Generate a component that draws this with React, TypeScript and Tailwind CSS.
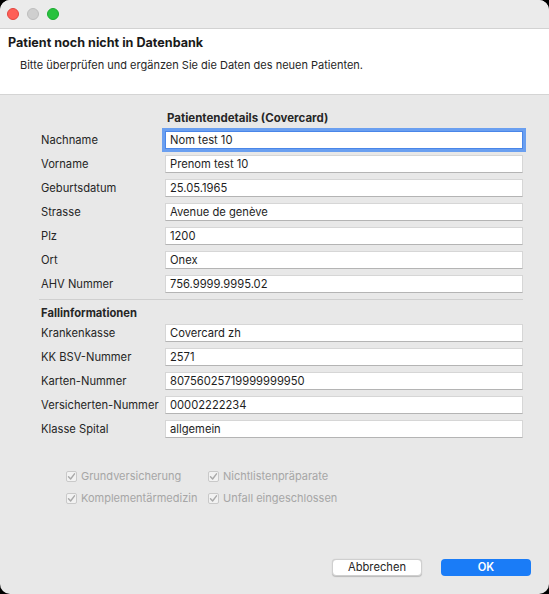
const patientFields = [
  { label: 'Nachname', value: 'Nom test 10', focused: true },
  { label: 'Vorname', value: 'Prenom test 10' },
  { label: 'Geburtsdatum', value: '25.05.1965' },
  { label: 'Strasse', value: 'Avenue de genève' },
  { label: 'Plz', value: '1200' },
  { label: 'Ort', value: 'Onex' },
  { label: 'AHV Nummer', value: '756.9999.9995.02' },
]

const caseFields = [
  { label: 'Krankenkasse', value: 'Covercard zh' },
  { label: 'KK BSV-Nummer', value: '2571' },
  { label: 'Karten-Nummer', value: '80756025719999999950' },
  { label: 'Versicherten-Nummer', value: '00002222234' },
  { label: 'Klasse Spital', value: 'allgemein' },
]

function FieldRow({ label, value, focused }: { label: string; value: string; focused?: boolean }) {
  return (
    <div className="flex h-[24px] items-center">
      <span className="w-[124px] whitespace-nowrap text-[11.2px] text-[#262626]">{label}</span>
      <div
        className={`flex h-[18px] w-[358px] items-center bg-white pl-[4px] text-[11.2px] text-[#1e1e1e] ${
          focused
            ? 'outline outline-[3px] outline-[#6a9ff0] border border-[#4a86e8]'
            : 'border border-[#d6d6d6] border-b-[#b4b4b4]'
        }`}
      >
        {value}
      </div>
    </div>
  )
}

function Check({ label }: { label: string }) {
  return (
    <div className="flex h-[18px] items-center gap-[4px]">
      <span className="flex h-[11px] w-[11px] items-center justify-center rounded-[2px] border border-[#c9c9c9] bg-[#f2f2f2]">
        <svg width="9" height="9" viewBox="0 0 9 9">
          <path d="M1.5 4.8 L3.6 7 L7.5 1.8" fill="none" stroke="#a9a9a9" strokeWidth="1.4" strokeLinecap="round" strokeLinejoin="round" />
        </svg>
      </span>
      <span className="whitespace-nowrap text-[11px] text-[#a6a6a6]">{label}</span>
    </div>
  )
}

export default function App() {
  return (
    <div className="h-[594px] w-[549px] bg-black" style={{ fontFamily: 'Inter, "Liberation Sans", sans-serif' }}>
      <div className="flex h-full w-full flex-col overflow-hidden rounded-[10px] bg-[#e8e8e8]">
        <div className="flex h-[29px] shrink-0 items-center gap-[8px] border-b border-[#d2d2d2] bg-[#ebebeb] pl-[7px]">
          <span className="h-[12px] w-[12px] rounded-full bg-[#fe5f57] border border-[#e2463f]" />
          <span className="h-[12px] w-[12px] rounded-full bg-[#cfcfcf] border border-[#bdbdbd]" />
          <span className="h-[12px] w-[12px] rounded-full bg-[#29c23f] border border-[#1aab2f]" />
        </div>
        <div className="h-[66px] shrink-0 border-b border-[#d4d4d4] bg-white pl-[8px] pt-[5px]">
          <div className="h-[18px] text-[12.6px] font-bold leading-[18px] text-[#1a1a1a]">Patient noch nicht in Datenbank</div>
          <div className="pl-[12px] pt-[4px] text-[11px] leading-[18px] text-[#262626]">
            Bitte überprüfen und ergänzen Sie die Daten des neuen Patienten.
          </div>
        </div>
        <div className="flex flex-1 flex-col pl-[41px] pt-[14px]">
          <div className="h-[18px] pl-[126px] text-[11.5px] font-bold leading-[18px] text-[#262626]">Patientendetails (Covercard)</div>
          <div className="mt-[1px] flex flex-col">
            {patientFields.map((f) => (
              <FieldRow key={f.label} {...f} />
            ))}
          </div>
          <div className="ml-[-2px] mt-[3px] h-px w-[484px] bg-[#cfcfcf]" />
          <div className="mt-[4px] h-[18px] text-[11.2px] font-bold leading-[18px] text-[#262626]">Fallinformationen</div>
          <div className="mt-[-1px] flex flex-col">
            {caseFields.map((f) => (
              <FieldRow key={f.label} {...f} />
            ))}
          </div>
          <div className="ml-[25px] mt-[26px] grid w-[290px] grid-cols-[142px_1fr] gap-y-[4px]">
            <Check label="Grundversicherung" />
            <Check label="Nichtlistenpräparate" />
            <Check label="Komplementärmedizin" />
            <Check label="Unfall eingeschlossen" />
          </div>
          <div className="mt-[52px] flex gap-[19px] pl-[291px]">
            <button className="flex h-[17px] w-[90px] items-center justify-center rounded-[4px] border border-[#cfcfcf] bg-white text-[11.2px] text-[#262626] shadow-[0_0.5px_1px_rgba(0,0,0,0.2)]">
              Abbrechen
            </button>
            <button className="flex h-[17px] w-[90px] items-center justify-center rounded-[4px] bg-[#1a7cf7] text-[11.2px] font-semibold text-white">
              OK
            </button>
          </div>
        </div>
      </div>
    </div>
  )
}
